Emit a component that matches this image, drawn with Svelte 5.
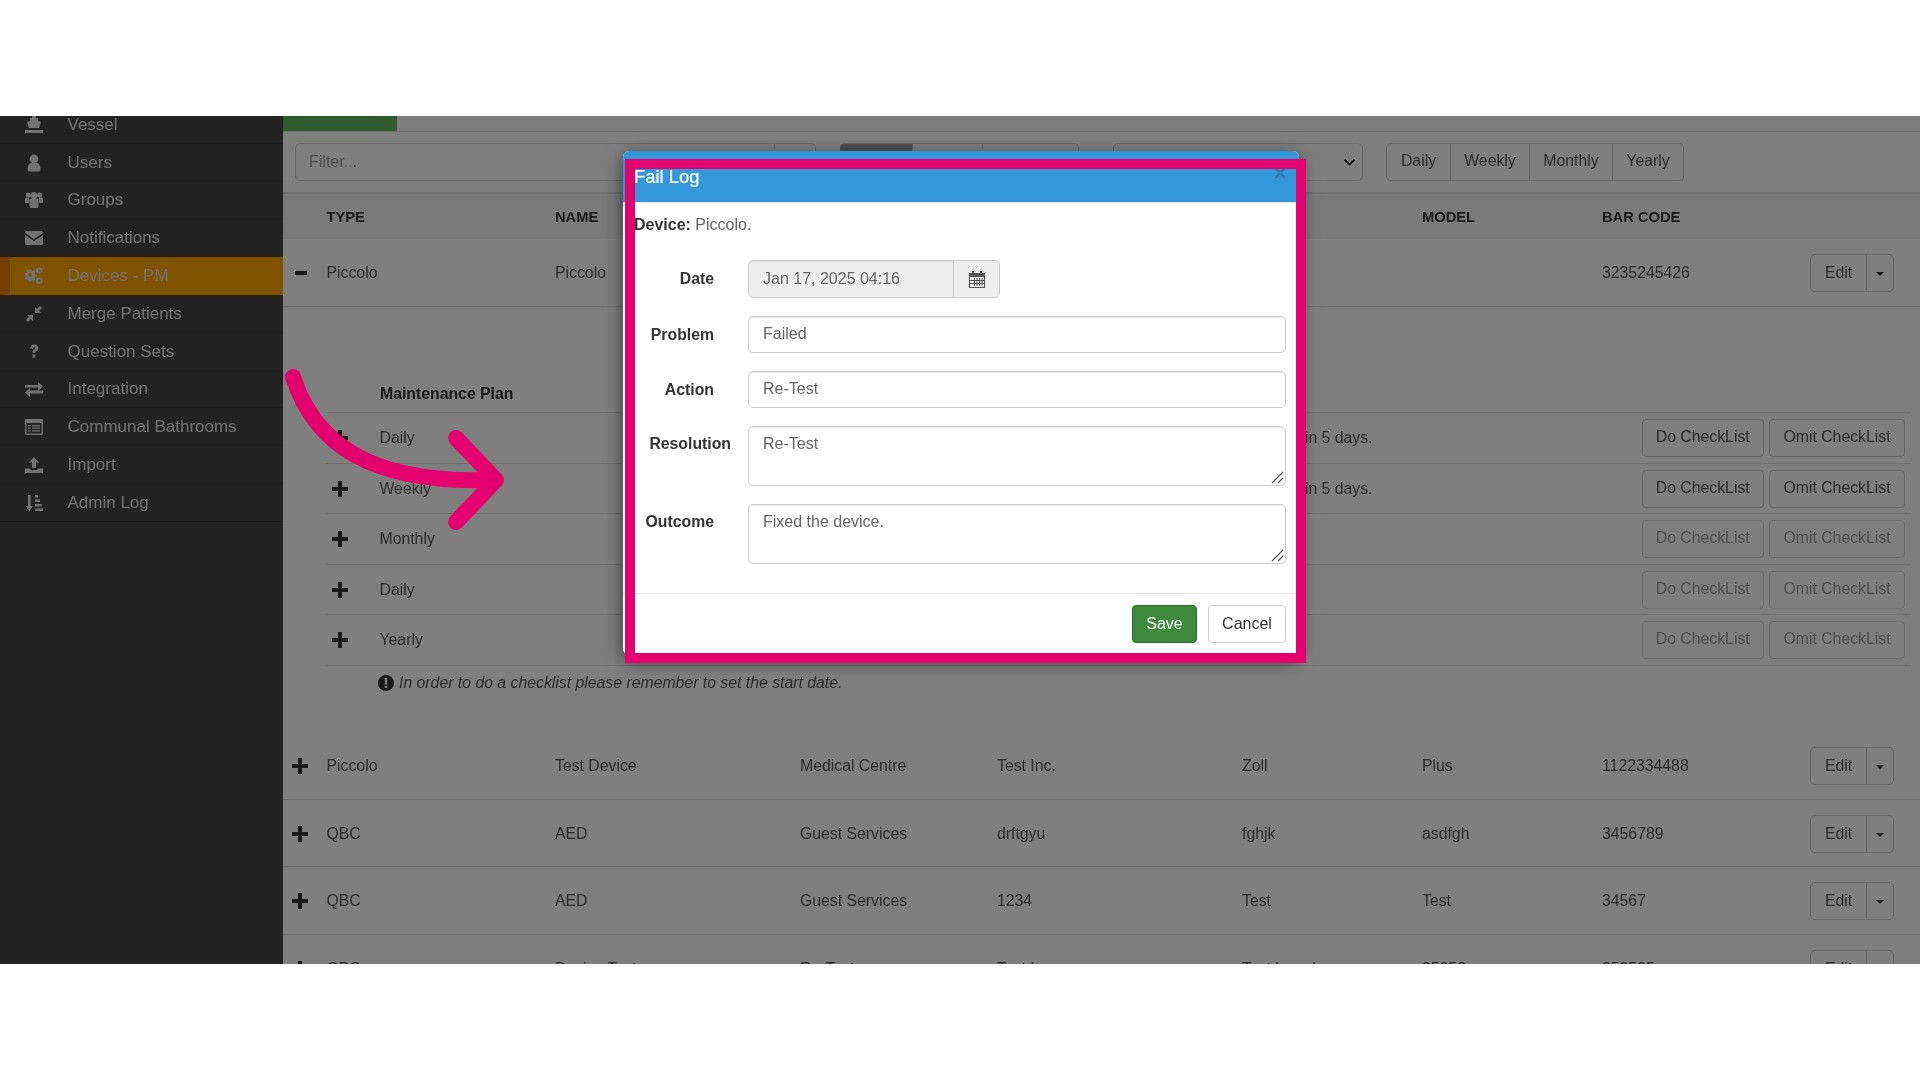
<script>
  const menu = [
    { name: 'Vessel', icon: 'ship' },
    { name: 'Users', icon: 'user' },
    { name: 'Groups', icon: 'group' },
    { name: 'Notifications', icon: 'mail' },
    { name: 'Devices - PM', icon: 'gears', active: true },
    { name: 'Merge Patients', icon: 'merge' },
    { name: 'Question Sets', icon: 'question' },
    { name: 'Integration', icon: 'swap' },
    { name: 'Communal Bathrooms', icon: 'list' },
    { name: 'Import', icon: 'upload' },
    { name: 'Admin Log', icon: 'sort' }
  ];

  const plans = [
    { name: 'Daily', due: 'Next check due in 5 days.' },
    { name: 'Weekly', due: 'Next check due in 5 days.' },
    { name: 'Monthly', off: true },
    { name: 'Daily', off: true },
    { name: 'Yearly', off: true }
  ];

  const devices = [
    ['Piccolo', 'Test Device', 'Medical Centre', 'Test Inc.', 'Zoll', 'Plus', '1122334488'],
    ['QBC', 'AED', 'Guest Services', 'drftgyu', 'fghjk', 'asdfgh', '3456789'],
    ['QBC', 'AED', 'Guest Services', '1234', 'Test', 'Test', '34567'],
    ['QBC', 'Device Test', 'Re-Test', 'Test Inc', 'Test brand', '25252', '252525']
  ];
</script>

<div class="screen">
  <nav class="side">
    {#each menu as item}
      <div class="item" class:active={item.active}>
        <svg class="ico" viewBox="0 0 18 18">
          {#if item.icon == 'ship'}
            <path d="M7 0h4v2h2v3l3 1-2 6H4L2 6l3-1V2h2z" />
            <path d="M0 14h18v3H0z" />
          {:else if item.icon == 'user'}
            <circle cx="9" cy="5" r="4.4" />
            <path d="M2.6 15.5c0-5 1.6-6.8 6.4-6.8s6.4 1.800 6.400 6.800c0 1.500-1 2-2 2H4.600c-1 0-2-.5-2-2z" />
          {:else if item.icon == 'group'}
            <circle cx="3.400" cy="4" r="2.500" />
            <circle cx="14.600" cy="4" r="2.500" />
            <circle cx="9" cy="4.500" r="3.400" />
            <path d="M0 8c0-1 1-1.500 2-1.500h2V12H0zM14 6.500h2c1 0 2 .5 2 1.500v4h-4z" />
            <path d="M4.500 9c0-1 1-1.500 2-1.500h5c1 0 2 .5 2 1.500v6.500c0 1-1 1.500-2 1.500h-5c-1 0-2-.5-2-1.500z" />
          {:else if item.icon == 'mail'}
            <path d="M1.500 2h15c.8 0 1.500.7 1.500 1.500v.6L9 10 0 4.100v-.6C0 2.700.7 2 1.500 2z" />
            <path d="M0 6l9 6 9-6v8.500c0 .8-.7 1.500-1.500 1.500h-15C.7 16 0 15.300 0 14.500z" />
          {:else if item.icon == 'gears'}
            <path fill-rule="evenodd" d="M4.800 3.500h2.400l.4 1.700 1.500.7 1.500-.9 1.600 1.700-.9 1.400.6 1.500 1.700.4v2.400l-1.700.4-.6 1.500.9 1.400-1.600 1.700-1.500-.9-1.500.6-.4 1.300H4.800l-.4-1.300-1.500-.6-1.500.9L-.2 13.700l.9-1.400-.6-1.500-.1-.4V8.500l1.700-.4.600-1.500-.9-1.400 1.600-1 1.500.9 1.500-.7zM6 8a2.300 2.300 0 1 0 0 4.600A2.300 2.300 0 0 0 6 8z" transform="translate(0,-1) scale(.85)" />
            <circle cx="14.300" cy="3.600" r="2.300" fill="none" stroke="currentColor" stroke-width="2" />
            <circle cx="14.300" cy="13.800" r="2.300" fill="none" stroke="currentColor" stroke-width="2" />
          {:else if item.icon == 'merge'}
            <path d="M8 10v6l-2-2-3 3-2-2 3-3-2-2zM10 8V2l2 2 3-3 2 2-3 3 2 2z" />
          {:else if item.icon == 'question'}
            <path d="M5 5.500C5 3 6.800 1.500 9.200 1.500c2.500 0 4.100 1.500 4.100 3.500 0 1.800-1 2.600-2 3.300-.7.500-1 .8-1 1.700H7.500c0-1.800.5-2.500 1.500-3.200.8-.6 1.200-1 1.200-1.700S9.800 4 9.200 4c-.8 0-1.200.6-1.300 1.700zM7.500 11.500h2.900v3H7.500z" />
          {:else if item.icon == 'swap'}
            <path d="M0 5h13V2l5 4.500-5 4.500V7.500H0zM18 10.500H5v-2.500L0 12.500 5 17v-3.500h13z" />
          {:else if item.icon == 'list'}
            <path fill-rule="evenodd" d="M1.500 1h15c.8 0 1.500.7 1.500 1.500v13c0 .8-.7 1.500-1.500 1.500h-15C.7 17 0 16.300 0 15.500v-13C0 1.700.7 1 1.500 1zM1.500 5v10.500h15V5zM3 7h2.500v1.200H3zM7 7h8v1.200H7zM3 9.600h2.500v1.200H3zM7 9.600h8v1.200H7zM3 12.200h2.500v1.200H3zM7 12.200h8v1.200H7z" />
          {:else if item.icon == 'upload'}
            <path d="M9 1l5 5.500h-3V12H7V6.500H4z" />
            <path d="M0 12.500h5.500v1.500h7v-1.500H18V17H0z" />
          {:else if item.icon == 'sort'}
            <path d="M3 1h2.600v11H8l-3.700 5L.6 12H3zM10 1h3v2.500h-3zM10 5.500h5v2.500h-5zM10 10h6.500v2.500H10zM10 14.500h8V17h-8z" />
          {/if}
        </svg>
        <span class="item-name">{item.name}</span>
      </div>
    {/each}
  </nav>

  <main class="main">
    <div class="progress"><div class="progress-fill"></div></div>

    <div class="toolbar">
      <div class="filter">
        <div class="filter-input">Filter...</div>
        <div class="filter-btn"></div>
      </div>
      <div class="seg">
        <div class="seg-part dark"></div>
        <div class="seg-part mid"></div>
        <div class="seg-part last"></div>
      </div>
      <div class="select">
        <svg width="13" height="9" viewBox="0 0 13 9"><path d="M1.500 1.500l5 5 5-5" fill="none" stroke="#333" stroke-width="1.800" /></svg>
      </div>
      <div class="range">
        <div class="range-btn w-daily">Daily</div>
        <div class="range-btn w-weekly">Weekly</div>
        <div class="range-btn w-monthly">Monthly</div>
        <div class="range-btn w-yearly">Yearly</div>
      </div>
    </div>

    <div class="row head">
      <div class="c0"></div>
      <div class="c1">TYPE</div>
      <div class="c2">NAME</div>
      <div class="c3">LOCATION</div>
      <div class="c4">MANUFACTURER</div>
      <div class="c5">BRAND</div>
      <div class="c6">MODEL</div>
      <div class="c7">BAR CODE</div>
    </div>

    <div class="row">
      <div class="c0"><span class="minus"></span></div>
      <div class="c1">Piccolo</div>
      <div class="c2">Piccolo</div>
      <div class="c3"></div>
      <div class="c4"></div>
      <div class="c5"></div>
      <div class="c6"></div>
      <div class="c7">3235245426</div>
      <div class="split"><span class="split-a">Edit</span><span class="split-b"><i class="caret"></i></span></div>
    </div>

    <section class="panel">
      <div class="plan-title">Maintenance Plan</div>
      {#each plans as plan}
        <div class="plan">
          <div class="plan-plus">
            <svg class="plus" viewBox="0 0 16 16"><path d="M6 0h4v6h6v4h-6v6H6v-6H0V6h6z" /></svg>
          </div>
          <div class="plan-name">{plan.name}</div>
          <div class="plan-due">{plan.due ?? ''}</div>
          <div class="plan-btn do" class:off={plan.off}>Do CheckList</div>
          <div class="plan-btn omit" class:off={plan.off}>Omit CheckList</div>
        </div>
      {/each}
      <div class="note">
        <svg width="16" height="16" viewBox="0 0 16 16"><path fill-rule="evenodd" d="M8 0a8 8 0 1 1 0 16A8 8 0 0 1 8 0zM6.600 3l.3 6.500h2.200L9.400 3zM6.800 10.800v2.200h2.400v-2.200z" /></svg>
        <em>In order to do a checklist please remember to set the start date.</em>
      </div>
    </section>

    {#each devices as d}
      <div class="row">
        <div class="c0">
          <svg class="plus" viewBox="0 0 16 16"><path d="M6 0h4v6h6v4h-6v6H6v-6H0V6h6z" /></svg>
        </div>
        <div class="c1">{d[0]}</div>
        <div class="c2">{d[1]}</div>
        <div class="c3">{d[2]}</div>
        <div class="c4">{d[3]}</div>
        <div class="c5">{d[4]}</div>
        <div class="c6">{d[5]}</div>
        <div class="c7">{d[6]}</div>
        <div class="split"><span class="split-a">Edit</span><span class="split-b"><i class="caret"></i></span></div>
      </div>
    {/each}
  </main>

  <div class="backdrop"></div>

  <div class="modal">
    <header class="modal-head">
      <span class="modal-title">Fail Log</span>
      <span class="close">×</span>
    </header>
    <div class="modal-body">
      <p class="device"><b>Device:</b> Piccolo.</p>
      <div class="form">
        <label class="lab" for="f-date">Date</label>
        <div class="date">
          <input id="f-date" class="field date-input" readonly value="Jan 17, 2025 04:16" />
          <span class="date-btn">
            <svg width="16" height="17" viewBox="0 0 16 17">
              <path fill="#555" fill-rule="evenodd" d="M3 0h2v2h6V0h2v2h3v15H0V2h3zM1 6v10h14V6zM4 7h1v2H4v1h1v2H4v1h1v2h1v-2h1.500v2h1v-2H10v2h1v-2h1.500v2h1v-2H15v-1h-1.500v-2H15V9h-1.500V7h-1v2H11V7h-1v2H8.500V7h-1v2H6V7H5zM6 10h1.500v2H6zM8.500 10H10v2H8.500zM11 10h1.500v2H11zM1 9h3v1H1zM1 12h3v1H1z" />
            </svg>
          </span>
        </div>
        <label class="lab" for="f-problem">Problem</label>
        <input id="f-problem" class="field" readonly value="Failed" />
        <label class="lab" for="f-action">Action</label>
        <input id="f-action" class="field" readonly value="Re-Test" />
        <label class="lab top wide" for="f-res">Resolution</label>
        <div class="area-wrap">
          <textarea id="f-res" class="field area" readonly>Re-Test</textarea>
          <svg class="grip" width="13" height="13" viewBox="0 0 13 13"><path d="M1 12L12 1M7 12l5-5" /></svg>
        </div>
        <label class="lab top" for="f-out">Outcome</label>
        <div class="area-wrap">
          <textarea id="f-out" class="field area" readonly>Fixed the device.</textarea>
          <svg class="grip" width="13" height="13" viewBox="0 0 13 13"><path d="M1 12L12 1M7 12l5-5" /></svg>
        </div>
      </div>
    </div>
    <footer class="modal-foot">
      <button class="btn save">Save</button>
      <button class="btn cancel">Cancel</button>
    </footer>
  </div>

  <!-- pink annotation drawn over the screenshot -->
  <div class="frame"></div>
  <svg class="arrow" width="240" height="170" viewBox="0 0 240 170">
    <path d="M8 11C30 78 85 118 208 114" />
    <path d="M171 72L211 114L171 156" />
  </svg>
</div>

<style>
  :global(body) {
    background: #fff;
  }
  .screen {
    position: relative;
    margin-top: 116px;
    height: 848px;
    overflow: hidden;
    display: flex;
    background: #fff;
    font-family: "Liberation Sans", Arial, sans-serif;
    font-size: 15.800px;
    color: #555;
    filter: blur(0.4px);
  }

  .side {
    flex: 0 0 283px;
    background: #444;
  }
  .item {
    display: flex;
    align-items: center;
    height: 37.8px;
    box-sizing: border-box;
    border-bottom: 1px solid #3a3a3a;
    color: #e4e4e4;
    font-size: 17px;
  }
  .item:first-child {
    margin-top: -10px;
  }
  .item.active {
    background: #ffa500;
    border-left: 10px solid #e67e00;
    border-bottom-color: #ffa500;
  }
  .item-name {
    margin: 1px 0 0 -0.5px;
  }
  .ico {
    width: 18px;
    height: 18px;
    margin: 1px 25px 0;
    fill: currentColor;
    flex: none;
  }
  .item.active .ico {
    margin-left: 15px;
  }

  .main {
    flex: 1;
    min-width: 0;
  }
  .progress {
    height: 16px;
    border-bottom: 1px solid #ddd;
    box-sizing: border-box;
  }
  .progress-fill {
    width: 114px;
    height: 15px;
    background: #5cb85c;
  }
  .toolbar {
    display: flex;
    height: 62px;
    box-sizing: border-box;
    padding: 11px 0 11px 12px;
    border-bottom: 2px solid #ddd;
  }
  .filter {
    display: flex;
    width: 521px;
    margin-right: 24px;
  }
  .filter-input {
    width: 480px;
    box-sizing: border-box;
    border: 1px solid #ccc;
    border-radius: 5px 0 0 5px;
    padding: 7px 13px;
    color: #999;
    font-size: 16px;
    line-height: 22px;
  }
  .filter-btn {
    width: 41px;
    border: 1px solid #ccc;
    border-left: 0;
    box-sizing: border-box;
    border-radius: 0 5px 5px 0;
  }
  .seg {
    display: flex;
    width: 239px;
    margin-right: 34px;
  }
  .seg-part {
    border: 1px solid #ccc;
    border-left: 0;
    box-sizing: border-box;
  }
  .dark {
    width: 73px;
    background: #9a9a9a;
    border-radius: 5px 0 0 5px;
  }
  .mid {
    width: 70px;
  }
  .last {
    width: 96px;
    border-radius: 0 5px 5px 0;
  }
  .select {
    width: 250px;
    margin-right: 23px;
    box-sizing: border-box;
    border: 1px solid #ccc;
    border-radius: 5px;
    display: flex;
    align-items: center;
    justify-content: flex-end;
    padding-right: 6px;
  }
  .range {
    display: flex;
    height: 38px;
  }
  .range-btn {
    box-sizing: border-box;
    border: 1px solid #ccc;
    border-left-width: 0;
    line-height: 34px;
    text-align: center;
  }
  .w-daily {
    width: 65px;
    border-left-width: 1px;
    border-radius: 5px 0 0 5px;
  }
  .w-weekly {
    width: 79px;
  }
  .w-monthly {
    width: 83px;
  }
  .w-yearly {
    width: 71px;
    border-radius: 0 5px 5px 0;
  }

  .row {
    display: flex;
    align-items: center;
    height: 67.5px;
    box-sizing: border-box;
    padding-top: 2px;
    border-bottom: 1px solid #ddd;
  }
  .row.head {
    height: 45px;
    padding-top: 0;
    background: #f5f5f5;
    border-bottom: 0;
    font-size: 14.700px;
    font-weight: bold;
    color: #333;
  }
  .c0 {
    flex: 0 0 43.500px;
    box-sizing: border-box;
    padding-left: 9px;
    display: flex;
  }
  .c1 {
    flex: 0 0 228.500px;
  }
  .c2 {
    flex: 0 0 245px;
  }
  .c3 {
    flex: 0 0 197px;
  }
  .c4 {
    flex: 0 0 245px;
  }
  .c5 {
    flex: 0 0 180px;
  }
  .c6 {
    flex: 0 0 180px;
  }
  .c7 {
    flex: 0 0 208px;
  }
  .plus {
    width: 16px;
    height: 16px;
    fill: #333;
  }
  .minus {
    width: 12px;
    height: 4px;
    margin-left: 3px;
    background: #333;
  }
  .split {
    display: flex;
    width: 84px;
    height: 38px;
    box-sizing: border-box;
    border: 1px solid #ccc;
    border-radius: 5px;
  }
  .split-a {
    width: 55px;
    border-right: 1px solid #ccc;
    line-height: 35px;
    text-align: center;
  }
  .split-b {
    flex: 1;
    display: flex;
    align-items: center;
    justify-content: center;
  }
  .caret {
    border: 4px solid transparent;
    border-top-color: #333;
    border-bottom: 0;
    margin-top: 2px;
  }

  .panel {
    height: 425.5px;
    box-sizing: border-box;
    margin-left: 43px;
    margin-right: 9px;
  }
  .plan-title {
    height: 106.500px;
    box-sizing: border-box;
    padding: 76px 0 0 54px;
    border-bottom: 1px solid #ddd;
    font-weight: bold;
    color: #333;
    line-height: 22px;
  }
  .plan {
    display: flex;
    align-items: center;
    height: 50.500px;
    box-sizing: border-box;
    padding: 1px 6px 0 0;
    border-bottom: 1px solid #ddd;
  }
  .plan-plus {
    flex: 0 0 53.500px;
    box-sizing: border-box;
    padding-left: 6px;
    display: flex;
  }
  .plan-name {
    flex: 0 0 200px;
  }
  .plan-due {
    flex: 1;
    text-align: right;
    padding-right: 269px;
  }
  .plan-btn {
    height: 38px;
    box-sizing: border-box;
    border: 1px solid #ccc;
    border-radius: 4px;
    line-height: 34px;
    text-align: center;
  }
  .plan-btn.off {
    color: #999;
    border-color: #ddd;
  }
  .do {
    width: 122.500px;
    margin-right: 5px;
  }
  .omit {
    width: 136px;
  }
  .note {
    display: flex;
    align-items: center;
    gap: 5px;
    margin: 6px 0 0 52px;
    height: 22px;
    color: #555;
  }
  .note svg {
    fill: #333;
  }

  .backdrop {
    position: absolute;
    inset: 0;
    background: rgba(0, 0, 0, 0.5);
  }

  .modal {
    position: absolute;
    left: 622.500px;
    top: 35px;
    width: 676.500px;
    height: 504px;
    background: #fff;
    border-radius: 6px;
    box-shadow: 0 5px 18px rgba(0, 0, 0, 0.6);
    overflow: hidden;
    display: flex;
    flex-direction: column;
    font-size: 16px;
  }
  .modal-head {
    flex: 0 0 52px;
    background: #3498db;
    color: #fff;
    display: flex;
    justify-content: space-between;
    padding: 15px 12px 0 11.500px;
    box-sizing: border-box;
    border-bottom: 1px solid #e5e5e5;
  }
  .modal-title {
    font-size: 18.400px;
    line-height: 22px;
    -webkit-text-stroke: 0.2px #fff;
  }
  .close {
    font-size: 24px;
    line-height: 13px;
    font-weight: bold;
    color: #000;
    opacity: 0.2;
  }
  .modal-body {
    flex: 1;
    padding: 11px 13px 0 11.500px;
  }
  .device {
    margin: 0 0 24px;
    line-height: 22px;
    color: #636363;
  }
  .device b {
    color: #333;
  }
  .form {
    display: grid;
    grid-template-columns: 80px 1fr;
    column-gap: 34px;
    row-gap: 17.500px;
  }
  .lab {
    text-align: right;
    font-weight: bold;
    font-size: 15.800px;
    color: #333;
    line-height: 37.500px;
    white-space: nowrap;
  }
  .lab.top {
    line-height: 22.800px;
    padding-top: 7px;
  }
  .lab.wide {
    margin-right: -17px;
    margin-left: -20px;
  }
  .field {
    width: 100%;
    height: 37.500px;
    box-sizing: border-box;
    border: 1px solid #ccc;
    border-radius: 5px;
    padding: 6px 15px 7px 14px;
    margin: 0;
    font-family: inherit;
    font-size: 16px;
    color: #666;
    background: #fff;
    outline: none;
    box-shadow: inset 0 1px 1px rgba(0, 0, 0, 0.08);
    display: block;
  }
  .area-wrap {
    position: relative;
  }
  .area {
    height: 60.500px;
    padding-top: 6.500px;
    line-height: 22.800px;
    resize: none;
  }
  .grip {
    position: absolute;
    right: 2px;
    bottom: 2px;
  }
  .grip path {
    fill: none;
    stroke: #555;
    stroke-width: 1.200px;
  }
  .date {
    display: flex;
    width: 252px;
    height: 38px;
  }
  .date-input {
    flex: 0 0 206px;
    width: 206px;
    height: 38px;
    background: #eee;
    border-radius: 5px 0 0 5px;
  }
  .date-btn {
    flex: 1;
    box-sizing: border-box;
    border: 1px solid #ccc;
    border-left: 0;
    border-radius: 0 5px 5px 0;
    background: #eee;
    display: flex;
    align-items: center;
    justify-content: center;
  }
  .modal-foot {
    flex: 0 0 62px;
    box-sizing: border-box;
    border-top: 1px solid #e5e5e5;
    padding: 11px 13px 0 0;
    display: flex;
    justify-content: flex-end;
    gap: 11px;
  }
  .btn {
    height: 38px;
    box-sizing: border-box;
    border-radius: 4px;
    font-family: inherit;
    font-size: 16px;
    padding: 0;
  }
  .save {
    width: 65px;
    background: #3d8b3d;
    border: 1px solid #2d6a2d;
    color: #fff;
  }
  .cancel {
    width: 78px;
    background: #fff;
    border: 1px solid #ccc;
    color: #333;
  }

  .frame {
    position: absolute;
    left: 625px;
    top: 43px;
    width: 681px;
    height: 504px;
    box-sizing: border-box;
    border: 10px solid #e5006f;
    pointer-events: none;
  }
  .arrow {
    position: absolute;
    left: 285px;
    top: 250px;
  }
  .arrow path {
    fill: none;
    stroke: #e5006f;
    stroke-width: 16px;
    stroke-linecap: round;
    stroke-linejoin: round;
  }
</style>
